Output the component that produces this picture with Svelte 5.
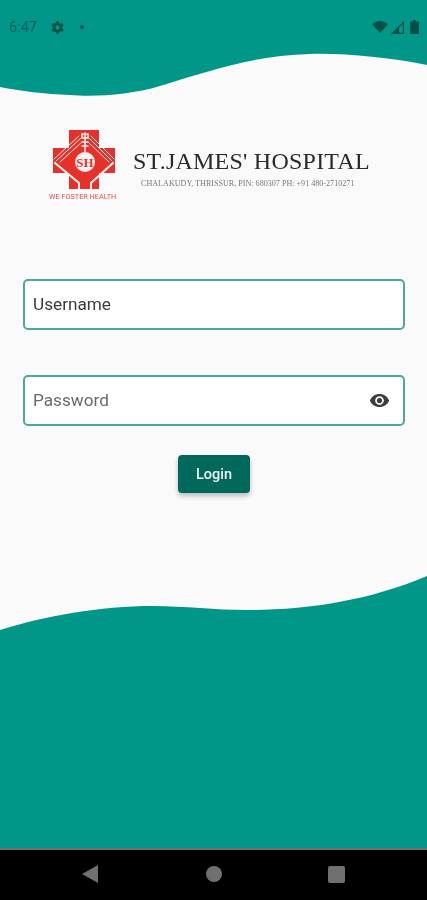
<script>
  let showPassword = $state(false);
</script>

<div class="screen">
  <svg class="backdrop" viewBox="0 0 427 900" aria-hidden="true">
    <path fill="#009688" d="M0 0H427V65C385 57 345 53 310 54C255 55 205 72 160 86C130 95 95 97 70 95C45 94 20 91 0 87Z" />
    <path fill="#009688" d="M0 630C45 616 100 606 153 606C185 606 215 610 247 610C310 610 370 600 427 576V900H0Z" />
  </svg>

  <header class="status">
    <span class="time">6:47</span>
    <svg class="gear" viewBox="0 0 24 24"><path d="M19.4 13c.1-.3.1-.6.1-1s0-.7-.1-1l2.1-1.6c.2-.2.2-.4.1-.6l-2-3.5c-.1-.2-.4-.3-.6-.2l-2.5 1c-.5-.4-1.100-.7-1.700-1l-.4-2.600c0-.3-.2-.4-.5-.4h-4c-.3 0-.5.1-.5.4l-.4 2.600c-.6.3-1.200.6-1.700 1l-2.500-1c-.2-.1-.5 0-.6.2l-2 3.500c-.1.2-.1.4.1.6L4.600 11c-.1.3-.1.700-.1 1s0 .7.1 1l-2.100 1.600c-.2.2-.2.4-.1.6l2 3.500c.1.2.4.3.6.2l2.500-1c.5.4 1.100.7 1.700 1l.4 2.600c0 .3.2.4.5.4h4c.3 0 .5-.1.5-.4l.4-2.600c.6-.3 1.200-.6 1.700-1l2.500 1c.2.1.5 0 .6-.2l2-3.500c.1-.2.1-.4-.1-.6ZM12 15.500a3.500 3.500 0 1 1 0-7 3.500 3.500 0 0 1 0 7Z" /></svg>
    <span class="dot"></span>
    <span class="spacer"></span>
    <svg class="wifi" viewBox="0 0 16 12"><path d="M0 3.200C2 1.300 4.800 0 8 0s6 1.300 8 3.200L8 12Z" /></svg>
    <svg class="signal" viewBox="0 0 13 13"><path d="M0 13 13 0V13ZM11.800 11.800V3L3 11.800Z" fill-rule="evenodd" /><path d="M0 13 8 5V13Z" /></svg>
    <svg class="battery" viewBox="0 0 9 14"><path d="M3 0h3v1.500h2c.6 0 1 .4 1 1V13c0 .6-.4 1-1 1H1c-.6 0-1-.4-1-1V2.500c0-.6.400-1 1-1h2Z" /></svg>
  </header>

  <main class="content">
    <section class="brand">
      <div class="mark">
        <svg viewBox="0 0 68 62" class="cross">
          <path fill="#e8302a" d="M16 0H46V18H62V43H46V59H16V43H0V18H16Z" />
          <g fill="none" stroke="#fbf3f0" stroke-linecap="round">
            <path stroke-width="1" d="M36 8 59 31M38 6 61 29M35 12 56 32M28 8 3 31M26 6 1 29M29 12 7 32" />
            <path stroke-width="2" d="M60 33 38 53V59M2 33 26 53V59" />
            <path stroke-width="1.500" d="M32 3V22M29 4h6v4h-6ZM29 12h6M29 16h6" />
          </g>
          <circle cx="32" cy="32" r="10" fill="#fbf3f0" />
          <text x="32" y="37" text-anchor="middle" class="initials">SH</text>
        </svg>
        <span class="motto">WE FOSTER HEALTH</span>
      </div>
      <div class="name">
        <h1>ST.JAMES' HOSPITAL</h1>
        <p>CHALAKUDY, THRISSUR, PIN: 680307 PH: +91 480-2710271</p>
      </div>
    </section>

    <form class="form" onsubmit={(e) => e.preventDefault()}>
      <label class="field">
        <input class="username" type="text" placeholder="Username" aria-label="Username" />
      </label>
      <label class="field">
        <input class="password" type={showPassword ? 'text' : 'password'} placeholder="Password" aria-label="Password" />
        <button type="button" class="eye" aria-label="Show password" onclick={() => (showPassword = !showPassword)}>
          <svg viewBox="0 0 24 24"><path d="M12 4.500C7 4.500 2.700 7.600 1 12c1.700 4.400 6 7.500 11 7.500s9.300-3.100 11-7.500c-1.700-4.400-6-7.500-11-7.500ZM12 17a5 5 0 1 1 0-10 5 5 0 0 1 0 10Zm0-8a3 3 0 1 0 0 6 3 3 0 0 0 0-6Z" /></svg>
        </button>
      </label>
      <button type="submit" class="login">Login</button>
    </form>
  </main>

  <nav class="nav">
    <svg viewBox="0 0 16 18" class="back"><path d="M16 0V18L0 9Z" /></svg>
    <span class="home"></span>
    <span class="recent"></span>
  </nav>
</div>

<style>
  :global(body) {
    margin: 0;
    background: #fafafa;
  }

  .screen {
    position: relative;
    width: 427px;
    height: 900px;
    display: flex;
    flex-direction: column;
    overflow: hidden;
    background: #fafafa;
    font-family: Roboto, "Liberation Sans", sans-serif;
  }

  .backdrop {
    position: absolute;
    inset: 0;
    width: 427px;
    height: 900px;
    filter: blur(0.4px);
  }

  .status {
    position: relative;
    height: 54px;
    box-sizing: border-box;
    padding: 0 8px 0 9px;
    display: flex;
    align-items: center;
    color: #00574f;
    filter: blur(0.4px);
  }

  .status svg {
    fill: #00504a;
    display: block;
  }

  .time {
    font-size: 14.500px;
    width: 40px;
    opacity: 0.85;
  }

  .gear {
    width: 15px;
    height: 15px;
    margin-left: 1px;
  }

  .dot {
    width: 4px;
    height: 4px;
    margin-left: 15px;
    border-radius: 50%;
    background: #00504a;
  }

  .spacer {
    flex: 1;
  }

  .wifi {
    width: 16px;
    height: 12px;
  }

  .signal {
    width: 13px;
    height: 13px;
    margin-left: 3px;
  }

  .battery {
    width: 9px;
    height: 14px;
    margin-left: 6px;
  }

  .content {
    position: relative;
    flex: 1;
    padding: 76px 22px 0 23px;
  }

  .brand {
    display: flex;
    height: 149px;
    padding-left: 26px;
  }

  .mark {
    width: 72px;
    filter: blur(0.5px);
  }

  .cross {
    display: block;
    width: 68px;
    height: 62px;
    margin-left: 4px;
  }

  .initials {
    font-family: "Liberation Serif", serif;
    font-size: 13px;
    font-weight: 700;
    fill: #e8302a;
  }

  .motto {
    display: block;
    margin-top: 1px;
    font-size: 7.300px;
    line-height: 8px;
    color: #e8504a;
    white-space: nowrap;
  }

  .name {
    margin-left: 12px;
    padding-top: 17px;
    font-family: "Liberation Serif", serif;
    filter: blur(0.4px);
  }

  h1 {
    margin: 0;
    font-size: 24px;
    line-height: 28px;
    font-weight: 400;
    letter-spacing: 0.23px;
    color: #2a2a2a;
    white-space: nowrap;
  }

  .name p {
    margin: 4px 0 0 8px;
    font-size: 8.100px;
    line-height: 10px;
    color: #777;
    white-space: nowrap;
  }

  .form {
    display: flex;
    flex-direction: column;
    align-items: center;
    gap: 45px;
    filter: blur(0.3px);
  }

  .field {
    position: relative;
    display: block;
    width: 382px;
    height: 51px;
  }

  .field input {
    width: 100%;
    height: 100%;
    box-sizing: border-box;
    padding: 0 48px 2px 8px;
    border: 2px solid #4ba89c;
    border-radius: 5px;
    background: #fff;
    outline: none;
    font: 400 17.200px Roboto, sans-serif;
  }

  .username::placeholder {
    color: #3c3c3c;
    opacity: 1;
  }

  .password::placeholder {
    color: #6a6a6a;
    opacity: 1;
  }

  .eye {
    position: absolute;
    top: 15px;
    right: 15px;
    width: 21px;
    height: 21px;
    padding: 0;
    border: 0;
    background: none;
  }

  .eye svg {
    display: block;
    width: 21px;
    height: 21px;
    fill: #3d3d3d;
  }

  .login {
    width: 72px;
    height: 38px;
    margin-top: -16px;
    padding: 0;
    border: 0;
    border-radius: 4px;
    background: #00695c;
    color: #eef5f3;
    font: 500 14.500px Roboto, sans-serif;
    box-shadow: 0 3px 5px rgba(0, 0, 0, 0.25);
  }

  .nav {
    position: relative;
    height: 52px;
    box-sizing: border-box;
    border-top: 2px solid #6f6f6f;
    background: #000;
    display: flex;
    align-items: center;
  }

  .back {
    position: absolute;
    left: 82px;
    top: 15px;
    width: 16px;
    height: 18px;
    fill: #707070;
  }

  .home {
    position: absolute;
    left: 206px;
    top: 16px;
    width: 16px;
    height: 16px;
    border-radius: 50%;
    background: #707070;
  }

  .recent {
    position: absolute;
    left: 328px;
    top: 16px;
    width: 17px;
    height: 17px;
    border-radius: 2px;
    background: #707070;
  }
</style>
